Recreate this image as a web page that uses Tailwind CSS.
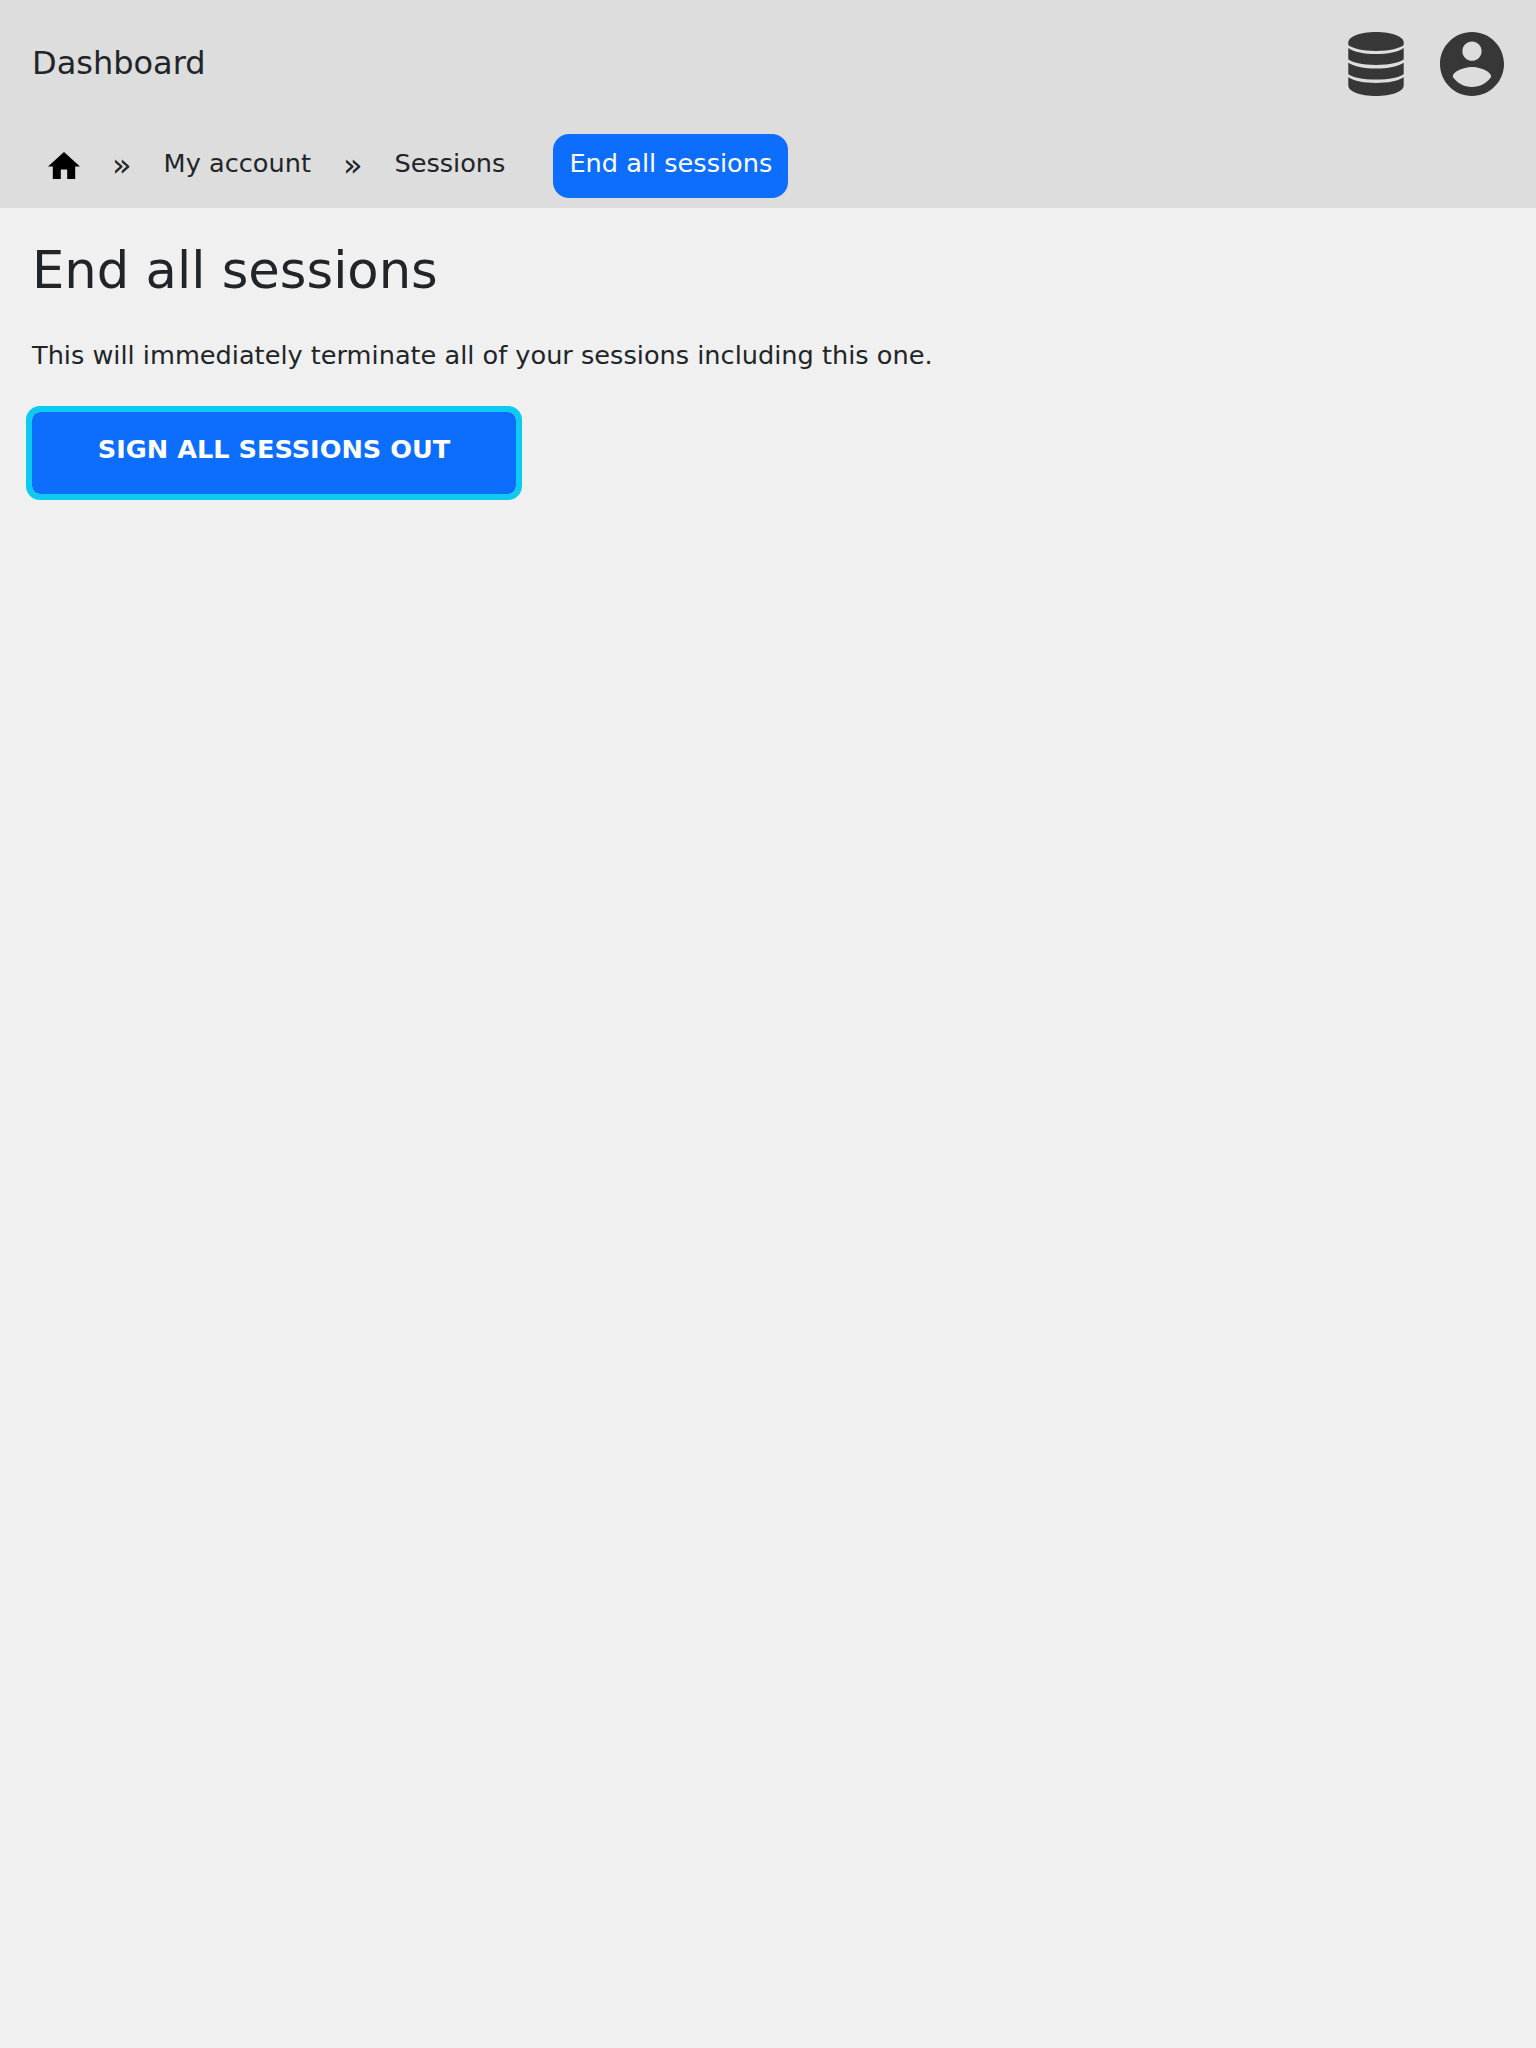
<!DOCTYPE html>
<html lang="en">
<head>
<meta charset="utf-8">
<title>End all sessions</title>
<script src="https://cdn.jsdelivr.net/npm/@tailwindcss/browser@4"></script>
</head>
<body class="min-h-screen bg-[#f0f0f0] font-['DejaVu_Sans',sans-serif] text-[25.6px] leading-[38.4px] text-[#212529]">
<header class="h-52 bg-[#dddddd]">
  <div class="flex h-32 items-center justify-between px-8">
    <a href="#" class="pb-0.5 text-[32px] leading-[48px]">Dashboard</a>
    <div class="flex items-center gap-9 text-[#373737]">
      <svg class="h-16 w-14" viewBox="0 0 56 64" fill="currentColor">
        <path d="M28 0C43.500 0 55.700 4.600 55.700 10.500V13C52 16.400 41.500 18.900 28 18.900S4 16.400.3 13V10.500C.3 4.600 12.500 0 28 0Z"/>
        <path d="M.3 16C6 20 16 22 28 22S50 20 55.700 16V27.300C52 30.500 41.500 33 28 33S4 30.500.3 27.300Z"/>
        <path d="M.3 30.700C6 34.500 16 36.500 28 36.500S50 34.500 55.700 30.700V42C52 45.200 41.500 47.600 28 47.600S4 45.200.3 42Z"/>
        <path d="M.3 45.300C6 49 16 51 28 51S50 49 55.700 45.300V53.500C55.700 59.400 43.500 64 28 64S.3 59.400.3 53.500Z"/>
      </svg>
      <svg class="size-16" viewBox="2 2 20 20" fill="currentColor">
        <path d="M12 2C6.480 2 2 6.480 2 12s4.480 10 10 10 10-4.480 10-10S17.520 2 12 2zm0 3c1.660 0 3 1.340 3 3s-1.340 3-3 3-3-1.340-3-3 1.340-3 3-3zm0 14.200c-2.500 0-4.710-1.280-6-3.220.03-1.990 4-3.080 6-3.080 1.990 0 5.970 1.090 6 3.080-1.290 1.940-3.500 3.220-6 3.220z"/>
      </svg>
    </div>
  </div>
  <nav class="flex h-20 items-start px-8 pt-1.5">
    <a href="#" class="px-4 pt-[18px]">
      <svg class="h-[27.200px] w-8" viewBox="2 3 20 17" fill="#000"><path d="M10 20v-6h4v6h5v-8h3L12 3 2 12h3v8z"/></svg>
    </a>
    <span class="w-[67.600px] pt-3 pr-4 text-center text-[32px]">»</span>
    <a href="#" class="pt-2.5">My account</a>
    <span class="w-[83.500px] pt-3 text-center text-[32px]">»</span>
    <a href="#" class="pt-2.5">Sessions</a>
    <a href="#" class="ml-12 h-16 rounded-2xl bg-[#0d6efd] px-4 pt-2.5 text-white">End all sessions</a>
  </nav>
</header>
<main class="px-8 pt-8">
  <h1 class="text-[51.200px] leading-[61.440px]">End all sessions</h1>
  <p class="mt-[35px]">This will immediately terminate all of your sessions including this one.</p>
  <button class="mt-[37px] block h-[82px] w-[484px] rounded-lg bg-[#0d6efd] pb-2 font-bold text-white outline-[6.400px] outline-[#0dcaf0]">SIGN ALL SESSIONS OUT</button>
</main>
</body>
</html>
